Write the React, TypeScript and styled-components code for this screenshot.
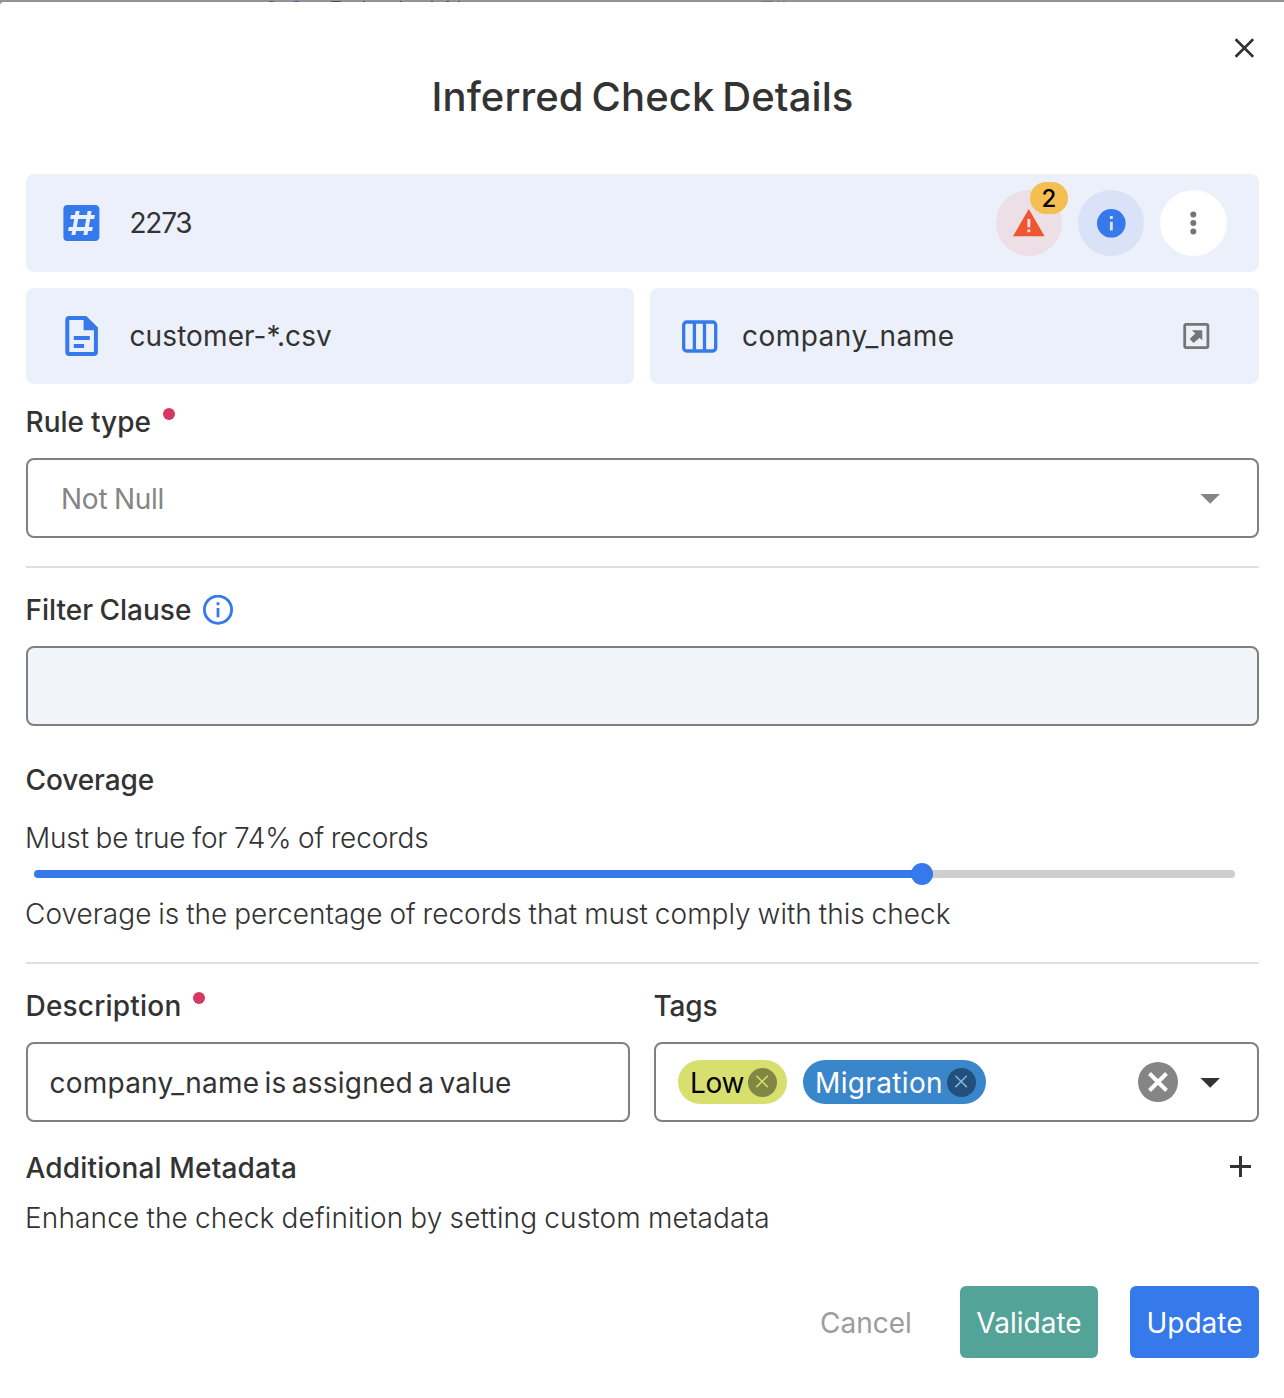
import React from "react";
import styled, { createGlobalStyle } from "styled-components";

const BLUE = "#3579ea";
const INK = "#333333";
const GREY = "#808080";

const GlobalStyle = createGlobalStyle`
  * { box-sizing: border-box; }
  body {
    margin: 0;
    background: #ffffff;
    color: ${INK};
    font-family: Inter, "Liberation Sans", sans-serif;
    font-size: 28px;
    line-height: 40px;
    -webkit-font-smoothing: antialiased;
  }
  svg { display: block; flex: none; }
`;

const Page = styled.div`
  width: 1284px;
  height: 1398px;
  display: flex;
  flex-direction: column;
  background: #939297;
`;

const Backdrop = styled.div`
  display: flex;
  align-items: flex-end;
  height: 2px;
  flex: none;
`;

const Glint = styled.i<{ $w: number; $color: string; $gap: number }>`
  width: ${(p) => p.$w}px;
  height: 1px;
  margin-left: ${(p) => p.$gap}px;
  background: ${(p) => p.$color};
`;

const Dialog = styled.main`
  flex: 1;
  display: flex;
  flex-direction: column;
  padding: 22px 25px 40px 26px;
  background: #ffffff;
  border-radius: 4px 0 0 0;
`;

const CloseRow = styled.div`
  display: flex;
  justify-content: flex-end;
  height: 48px;
  margin-right: -9px;
`;

const IconButton = styled.button`
  display: flex;
  align-items: center;
  justify-content: center;
  width: 48px;
  height: 48px;
  padding: 0;
  border: 0;
  background: none;
`;

const Text = styled.span<{
  $weight?: number;
  $track?: number;
  $word?: number;
  $color?: string;
}>`
  font-weight: ${(p) => p.$weight ?? 400};
  letter-spacing: ${(p) => p.$track ?? 0}px;
  word-spacing: ${(p) => p.$word ?? 0}px;
  color: ${(p) => p.$color ?? INK};
  white-space: nowrap;
`;

const Label = styled(Text)`
  font-weight: 500;
  margin-left: -0.5px;
`;

const Copy = styled(Text)`
  font-weight: 300;
  margin-left: -1px;
`;

const FieldText = styled(Text)`
  padding-top: 2px;
`;

const Title = styled.h1`
  margin: -2px 0 51px;
  height: 53px;
  font-size: 40px;
  line-height: 53px;
  font-weight: 500;
  text-align: center;
  letter-spacing: 0.08px;
  word-spacing: -2.8px;
`;

const Summary = styled.section`
  display: grid;
  grid-template-columns: 608px 609px;
  grid-template-rows: 98px 96px;
  gap: 16px;
`;

const Tile = styled.div<{ $wide?: boolean; $left: number; $right?: number; $gap: number }>`
  grid-column: ${(p) => (p.$wide ? "1 / -1" : "auto")};
  display: flex;
  align-items: center;
  gap: ${(p) => p.$gap}px;
  padding: 0 ${(p) => p.$right ?? 32}px 0 ${(p) => p.$left}px;
  border-radius: 8px;
  background: #ecf0fb;
`;

const Actions = styled.div`
  display: flex;
  gap: 16px;
  margin-left: auto;
`;

const RoundButton = styled.button<{ $bg: string; $w?: number }>`
  position: relative;
  display: flex;
  align-items: center;
  justify-content: center;
  width: ${(p) => p.$w ?? 66}px;
  height: 66px;
  padding: 0;
  border: 0;
  border-radius: 50%;
  background: ${(p) => p.$bg};
`;

const Badge = styled.span`
  position: absolute;
  top: -8px;
  left: 34px;
  width: 38px;
  height: 32px;
  border-radius: 16px;
  background: #f4be50;
  color: #000000;
  font: 500 24px/33px Inter, sans-serif;
  text-align: center;
`;

const TileEnd = styled.div`
  margin-left: auto;
`;

const LabelRow = styled.div<{ $top: number; $bottom: number }>`
  display: flex;
  align-items: center;
  height: 40px;
  margin: ${(p) => p.$top}px 0 ${(p) => p.$bottom}px;
`;

const Required = styled.i`
  width: 12px;
  height: 12px;
  margin: 0 0 16px 12px;
  border-radius: 50%;
  background: #d63864;
`;

const HelpIcon = styled.span`
  margin-left: 11.5px;
`;

const Field = styled.div<{ $filled?: boolean; $left?: number }>`
  display: flex;
  align-items: center;
  flex: none;
  height: 80px;
  padding: 0 37px 0 ${(p) => p.$left ?? 33}px;
  border: 2px solid ${GREY};
  border-radius: 8px;
  background: ${(p) => (p.$filled ? "#f1f5fa" : "#ffffff")};
`;

const Spacer = styled.span`
  flex: 1;
`;

const Rule = styled.hr<{ $top: number }>`
  flex: none;
  width: 100%;
  height: 2px;
  margin: ${(p) => p.$top}px 0 0;
  border: 0;
  background: #e0e0e0;
`;

const Slider = styled.div`
  display: flex;
  align-items: center;
  height: 22px;
  margin: 5px 24px 9px 8px;
`;

const Track = styled.div<{ $on?: boolean }>`
  flex: ${(p) => (p.$on ? "0 0 879px" : 1)};
  height: 8px;
  border-radius: ${(p) => (p.$on ? "4px 0 0 4px" : "0 4px 4px 0")};
  background: ${(p) => (p.$on ? BLUE : "#cecece")};
  margin: ${(p) => (p.$on ? "0 -2px 0 0" : "0 0 0 -2px")};
`;

const Thumb = styled.div`
  width: 22px;
  height: 22px;
  border-radius: 50%;
  background: ${BLUE};
  z-index: 1;
`;

const Columns = styled.div`
  display: grid;
  grid-template-columns: 604px 605px;
  column-gap: 24px;
`;

const Chip = styled.span<{ $bg: string; $w: number }>`
  display: flex;
  align-items: center;
  justify-content: space-between;
  width: ${(p) => p.$w}px;
  height: 44px;
  margin-right: 16px;
  padding: 0 10px 0 12px;
  border-radius: 22px;
  background: ${(p) => p.$bg};
`;

const Footer = styled.footer`
  display: flex;
  align-items: center;
  justify-content: flex-end;
  margin-top: auto;
  gap: 32px;
`;

const Button = styled.button<{ $bg?: string; $w: number }>`
  display: flex;
  align-items: center;
  justify-content: center;
  width: ${(p) => p.$w}px;
  height: 72px;
  padding: 2px 0 0;
  border: 0;
  border-radius: 6px;
  font: inherit;
  background: ${(p) => p.$bg ?? "transparent"};
`;

const HashIcon = () => (
  <svg width="48" height="48" viewBox="0 0 24 24" fill={BLUE}>
    <path
      fillRule="evenodd"
      d="M3.2,5V19A2,2 0 0,0 5.2,21H19.2C20.3,21 21.2,20.1 21.2,19V5C21.2,3.89 20.3,3 19.2,3H5.2A2,2 0 0,0 3.2,5M7.2,18H9.2L9.55,16H13.55L13.2,18H15.2L15.55,16H17.55L17.91,14H15.91L16.61,10H18.61L18.96,8H16.96L17.32,6H15.32L14.96,8H10.96L11.32,6H9.32L8.96,8H6.96L6.61,10H8.61L7.91,14H5.91L5.55,16H7.55L7.2,18M10.61,10H14.61L13.91,14H9.91L10.61,10Z"
    />
  </svg>
);

const FileIcon = () => (
  <svg width="33" height="40" viewBox="0 0 33 40" fill={BLUE}>
    <path
      fillRule="evenodd"
      d="M4.3 0H21.3L32.9 11.5V36a4 4 0 0 1-4 4H4.3a4 4 0 0 1-4-4V4a4 4 0 0 1 4-4ZM4.3 4V36H28.9V14.3H18.6V4Z"
    />
    <path d="M8.8 20h16v4H8.8zM8.8 28h10.3v4H8.8z" />
  </svg>
);

const ColumnsIcon = () => (
  <svg width="36" height="33" viewBox="0 0 36 33" fill="none" stroke={BLUE} strokeWidth="3.3">
    <rect x="1.7" y="2" width="32" height="29" rx="3" />
    <path d="M12.4 2V31M22.5 2V31" />
  </svg>
);

const OpenIcon = () => (
  <svg width="27" height="26" viewBox="0 0 27 26">
    <rect x="1.7" y="1.4" width="23.2" height="23.2" rx="1.5" fill="none" stroke="#757575" strokeWidth="2.8" />
    <path fill="#757575" d="M9 7.3H19.3V17.3L16.6 14.7L10.6 20L6.6 16L12.3 10.6Z" />
  </svg>
);

const WarningIcon = () => (
  <svg width="32" height="28" viewBox="0 0 32 28">
    <path d="M15.8 0L31.6 27.3H0Z" fill="#ee562f" />
    <path d="M14.4 10h2.9v8.2h-2.9zM14.4 20.4h2.9v2.9h-2.9z" fill="#ecdfe5" />
  </svg>
);

const InfoSolidIcon = () => (
  <svg width="29" height="29" viewBox="0 0 29 29">
    <circle cx="14.3" cy="14.3" r="14.3" fill={BLUE} />
    <path d="M12.9 7.1H15.8V10H12.9zM12.9 12.8H15.8V21.5H12.9z" fill="#d9e2f6" />
  </svg>
);

const InfoOutlineIcon = () => (
  <svg width="30" height="30" viewBox="0 0 30 30">
    <circle cx="15" cy="14.7" r="13.6" fill="none" stroke={BLUE} strokeWidth="2.8" />
    <path d="M13.6 7.3H16.4V10.2H13.6zM13.6 13.1H16.4V22.2H13.6z" fill={BLUE} />
  </svg>
);

const DotsIcon = () => (
  <svg width="7" height="24" viewBox="0 0 7 24" fill="#757575">
    <circle cx="3.3" cy="3.4" r="3" />
    <circle cx="3.3" cy="12" r="3" />
    <circle cx="3.3" cy="20.6" r="3" />
  </svg>
);

const Caret = ({ color }: { color: string }) => (
  <svg width="20" height="12" viewBox="0 0 20 12">
    <path d="M0.4 2H20L10.2 11.8Z" fill={color} />
  </svg>
);

const CloseIcon = () => (
  <svg width="20" height="20" viewBox="0 0 20 20" stroke={INK} strokeWidth="2.7">
    <path d="M1.6 1.2L19.2 18.8M19.2 1.2L1.6 18.8" />
  </svg>
);

const PlusIcon = () => (
  <svg width="21" height="21" viewBox="0 0 21 21" fill={INK}>
    <path d="M9 0h3v9h9v3h-9v9H9v-9H0V9h9z" />
  </svg>
);

const ClearIcon = () => (
  <svg width="40" height="40" viewBox="0 0 40 40">
    <circle cx="20" cy="20" r="20" fill="#858585" />
    <path d="M11.5 11.5L28.5 28.5M28.5 11.5L11.5 28.5" stroke="#ffffff" strokeWidth="4" />
  </svg>
);

const ChipClose = ({ bg, fg }: { bg: string; fg: string }) => (
  <svg width="29" height="29" viewBox="0 0 29 29">
    <circle cx="14.5" cy="14.5" r="14.5" fill={bg} />
    <path d="M8.4 7.7L19.8 19.1M19.8 7.7L8.4 19.1" stroke={fg} strokeWidth="1.5" />
  </svg>
);

const FieldActions = styled.div`
  display: flex;
  align-items: center;
  gap: 22px;
`;

const PlusSlot = styled.div`
  margin: 0 8px 3px auto;
`;

export default function App() {
  return (
    <Page>
      <GlobalStyle />
      <Backdrop>
        <Glint $w={5} $color="#3f5f95" $gap={269} />
        <Glint $w={5} $color="#3f5f95" $gap={20} />
        <Glint $w={10} $color="#504f54" $gap={32} />
        <Glint $w={2} $color="#504f54" $gap={22} />
        <Glint $w={2} $color="#504f54" $gap={35} />
        <Glint $w={2} $color="#504f54" $gap={29} />
        <Glint $w={3} $color="#504f54" $gap={13} />
        <Glint $w={2} $color="#504f54" $gap={9} />
        <Glint $w={12} $color="#75747a" $gap={301} />
        <Glint $w={2} $color="#75747a" $gap={4} />
        <Glint $w={2} $color="#75747a" $gap={4} />
      </Backdrop>
      <Dialog>
        <CloseRow>
          <IconButton aria-label="Close">
            <CloseIcon />
          </IconButton>
        </CloseRow>
        <Title>Inferred Check Details</Title>

        <Summary>
          <Tile $wide $left={31} $gap={24.4}>
            <HashIcon />
            <Text $track={-1.2}>2273</Text>
            <Actions>
              <RoundButton $bg="#ecdfe5">
                <WarningIcon />
                <Badge>2</Badge>
              </RoundButton>
              <RoundButton $bg="#d9e2f6">
                <InfoSolidIcon />
              </RoundButton>
              <RoundButton $bg="#ffffff" $w={67}>
                <DotsIcon />
              </RoundButton>
            </Actions>
          </Tile>
          <Tile $left={39} $gap={31.5}>
            <FileIcon />
            <Text $track={0.1}>customer-*.csv</Text>
          </Tile>
          <Tile $left={32} $right={49} $gap={24}>
            <ColumnsIcon />
            <Text $track={0.47}>company_name</Text>
            <TileEnd>
              <OpenIcon />
            </TileEnd>
          </Tile>
        </Summary>

        <LabelRow $top={18} $bottom={16}>
          <Label $word={-0.5}>Rule type</Label>
          <Required />
        </LabelRow>
        <Field>
          <FieldText $color="#858585" $track={-0.25} $word={-1}>
            Not Null
          </FieldText>
          <Spacer />
          <Caret color="#858585" />
        </Field>
        <Rule $top={28} />

        <LabelRow $top={22} $bottom={16}>
          <Label $word={-1}>Filter Clause</Label>
          <HelpIcon>
            <InfoOutlineIcon />
          </HelpIcon>
        </LabelRow>
        <Field $filled />

        <LabelRow $top={34} $bottom={18}>
          <Label $track={-0.1}>Coverage</Label>
        </LabelRow>
        <Copy $track={-0.17} $word={-1}>
          Must be true for 74% of records
        </Copy>
        <Slider>
          <Track $on />
          <Thumb />
          <Track />
        </Slider>
        <Copy $track={0.02} $word={-1}>
          Coverage is the percentage of records that must comply with this check
        </Copy>
        <Rule $top={28} />

        <Columns>
          <div>
            <LabelRow $top={22} $bottom={16}>
              <Label $track={0.2}>Description</Label>
              <Required />
            </LabelRow>
            <Field $left={21.5}>
              <FieldText $track={0.23} $word={-2.8}>
                company_name is assigned a value
              </FieldText>
            </Field>
          </div>
          <div>
            <LabelRow $top={22} $bottom={16}>
              <Label $track={-0.2}>Tags</Label>
            </LabelRow>
            <Field $left={22}>
              <Chip $bg="#d7e06f" $w={109}>
                <FieldText $color="#000000" $track={-0.3}>
                  Low
                </FieldText>
                <ChipClose bg="#818643" fg="#d7e06f" />
              </Chip>
              <Chip $bg="#3a86cb" $w={183}>
                <FieldText $color="#ffffff" $track={0.35}>
                  Migration
                </FieldText>
                <ChipClose bg="#23507a" fg="#84b4e0" />
              </Chip>
              <Spacer />
              <FieldActions>
                <ClearIcon />
                <Caret color={INK} />
              </FieldActions>
            </Field>
          </div>
        </Columns>

        <LabelRow $top={26} $bottom={10}>
          <Label $track={0.16}>Additional Metadata</Label>
          <PlusSlot>
            <PlusIcon />
          </PlusSlot>
        </LabelRow>
        <Copy $track={0.15} $word={-1}>
          Enhance the check definition by setting custom metadata
        </Copy>

        <Footer>
          <Button $w={124}>
            <Text $color="#9c9c9c">Cancel</Text>
          </Button>
          <Button $bg="#53a398" $w={138}>
            <Text $color="#ffffff">Validate</Text>
          </Button>
          <Button $bg={BLUE} $w={129}>
            <Text $color="#ffffff">Update</Text>
          </Button>
        </Footer>
      </Dialog>
    </Page>
  );
}
